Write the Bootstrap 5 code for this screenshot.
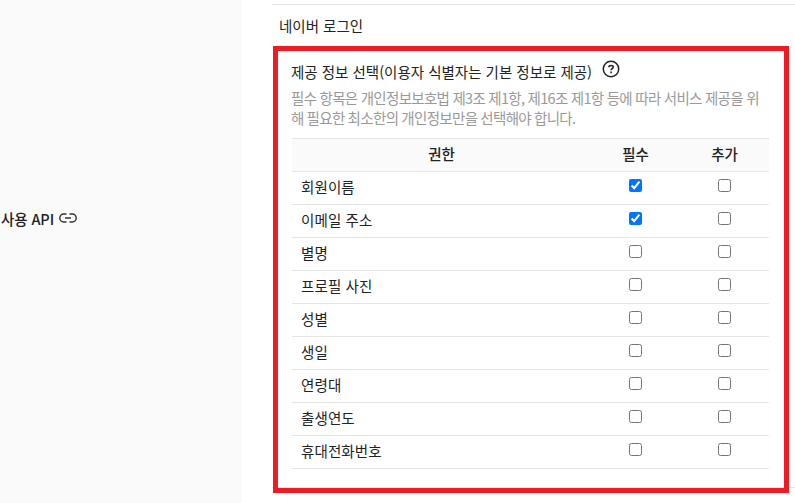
<!DOCTYPE html>
<html lang="ko">
<head>
<meta charset="utf-8">
<meta name="viewport" content="width=device-width, initial-scale=1">
<title>사용 API</title>
<link href="https://cdn.jsdelivr.net/npm/bootstrap@5.3.0/dist/css/bootstrap.min.css" rel="stylesheet">
<style>
  body { font-family: "Noto Sans CJK KR", sans-serif; font-size: 14.5px; line-height: 20px; color: #222; background: #fff; }
  .side-label { width: 242px; background: #fafafa; padding: 0 0 65px 1px; font-weight: 500; }
  .side-label span { letter-spacing: -.1px; }
  .link-icon { margin: 0 0 2px 5px; }
  .api-panel { margin: 4px 0 0 30px; height: 484px; border: solid #e5e5e5; border-width: 1px 0; padding: 11px 26px 0 7px; }
  .consent { padding: 26px 0 0 12px; }
  .help-icon { margin: -2px 0 0 10px; }
  .consent-note { color: #999; font-size: 14.5px; letter-spacing: -.65px; word-spacing: -.5px; margin-top: 6px; white-space: nowrap; }
  .consent-note div:first-child { letter-spacing: -.7px; word-spacing: -.1px; }
  .perm-table { width: 477px; margin: 10px 0 0 1px; table-layout: fixed; border-top: 1px solid #e5e5e5; border-collapse: separate; border-spacing: 0; }
  .perm-table th, .perm-table td { height: 33px; padding: 0; border-bottom: 1px solid #e5e5e5; }
  .perm-table th { background: #fafafa; font-weight: 500; text-align: center; padding-bottom: 3px; }
  .perm-table td:first-child { padding: 0 0 2px 9px; letter-spacing: .1px; }
  .perm-table input { display: block; width: 13px; height: 13px; margin: 0 auto 5px; }
  .col-check { width: 89px; }
  .highlight-frame { left: 1px; top: 41px; width: 516px; height: 447px; border: 5px solid #ed1c24; pointer-events: none; }
</style>
</head>
<body>
<div class="d-flex vh-100 overflow-hidden">
  <aside class="side-label d-flex align-items-center flex-shrink-0">
    <span>사용 API</span>
    <svg class="link-icon" width="18" height="10" viewBox="0 0 18 10" fill="none" stroke="#333" stroke-width="1.5"><path d="M7.500 1H4.800a4 4 0 0 0 0 8h2.700M10.500 1h2.700a4 4 0 0 1 0 8h-2.700M6 5h6"/></svg>
  </aside>
  <main class="flex-grow-1">
    <section class="api-panel position-relative">
      <div>네이버 로그인</div>
      <div class="consent">
        <div class="d-flex">
          <span class="text-nowrap">제공 정보 선택(이용자 식별자는 기본 정보로 제공)</span>
          <svg class="help-icon" width="18" height="18" viewBox="0 0 18 18" fill="none" stroke="#222"><circle cx="9" cy="9" r="7.700" stroke-width="1.500"/><path d="M6.900 7.200C7 5 11.200 5 11.200 7.200c0 1.500-2.100 1.400-2.100 3M9.100 11.600v1.600" stroke-width="1.600"/></svg>
        </div>
        <div class="consent-note">
          <div>필수 항목은 개인정보보호법 제3조 제1항, 제16조 제1항 등에 따라 서비스 제공을 위</div>
          <div>해 필요한 최소한의 개인정보만을 선택해야 합니다.</div>
        </div>
        <table class="perm-table">
          <colgroup><col><col class="col-check"><col class="col-check"></colgroup>
          <thead><tr><th>권한</th><th>필수</th><th>추가</th></tr></thead>
          <tbody>
            <tr><td>회원이름</td><td><input type="checkbox" checked></td><td><input type="checkbox"></td></tr>
            <tr><td>이메일 주소</td><td><input type="checkbox" checked></td><td><input type="checkbox"></td></tr>
            <tr><td>별명</td><td><input type="checkbox"></td><td><input type="checkbox"></td></tr>
            <tr><td>프로필 사진</td><td><input type="checkbox"></td><td><input type="checkbox"></td></tr>
            <tr><td>성별</td><td><input type="checkbox"></td><td><input type="checkbox"></td></tr>
            <tr><td>생일</td><td><input type="checkbox"></td><td><input type="checkbox"></td></tr>
            <tr><td>연령대</td><td><input type="checkbox"></td><td><input type="checkbox"></td></tr>
            <tr><td>출생연도</td><td><input type="checkbox"></td><td><input type="checkbox"></td></tr>
            <tr><td>휴대전화번호</td><td><input type="checkbox"></td><td><input type="checkbox"></td></tr>
          </tbody>
        </table>
      </div>
      <div class="highlight-frame position-absolute"></div>
    </section>
  </main>
</div>
<script src="https://cdn.jsdelivr.net/npm/bootstrap@5.3.0/dist/js/bootstrap.bundle.min.js"></script>
</body>
</html>
